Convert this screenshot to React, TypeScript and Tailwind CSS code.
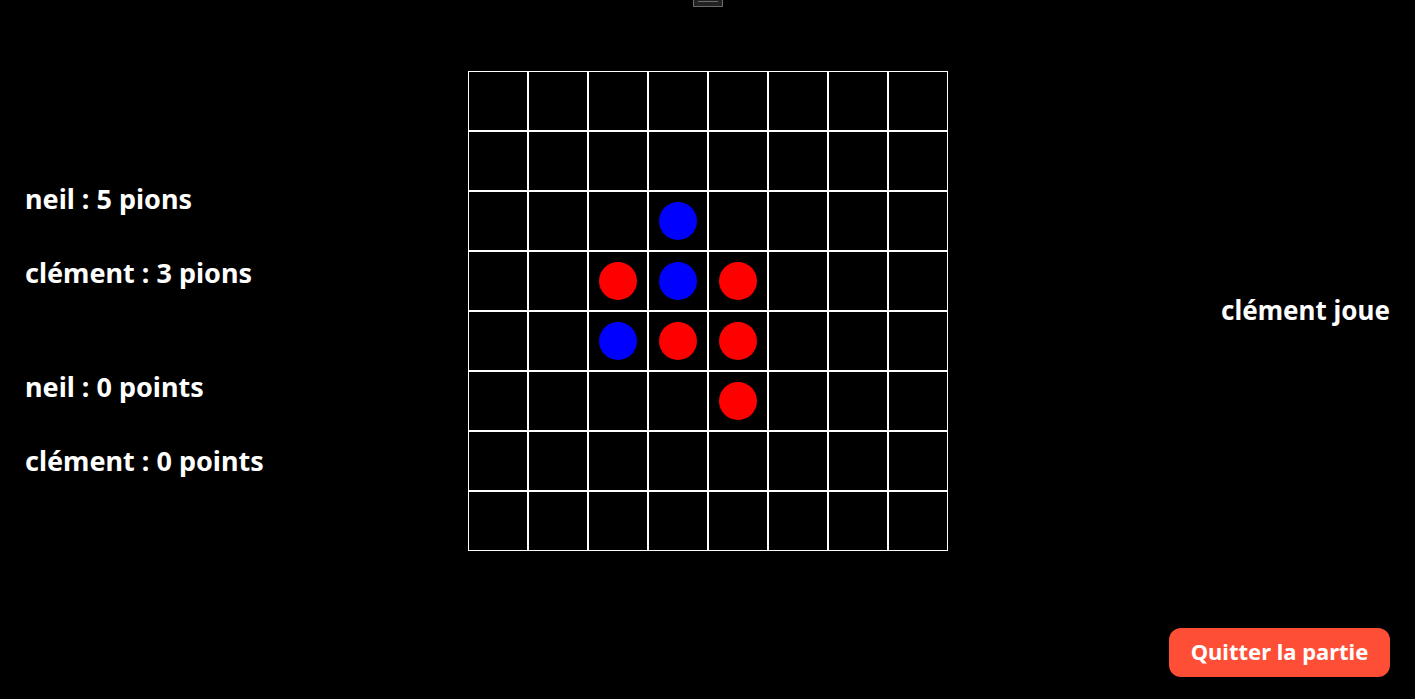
type Color = "red" | "blue";

const SIZE = 8;

const pieces: Record<string, Color> = {
  "2-3": "blue",
  "3-2": "red",
  "3-3": "blue",
  "3-4": "red",
  "4-2": "blue",
  "4-3": "red",
  "4-4": "red",
  "5-4": "red",
};

function Board() {
  return (
    <div role="group" aria-label="Plateau" className="grid grid-cols-8">
      {Array.from({ length: SIZE * SIZE }, (_, i) => {
        const color = pieces[`${Math.floor(i / SIZE)}-${i % SIZE}`];
        return (
          <button
            key={i}
            type="button"
            aria-label={`Case ${i + 1}`}
            className="flex size-15 items-center justify-center border border-white"
          >
            {color && (
              <span
                className={`size-[38px] rounded-full ${color === "red" ? "bg-[#ff0000]" : "bg-[#0000ff]"}`}
              />
            )}
          </button>
        );
      })}
    </div>
  );
}

export default function App() {
  return (
    <div className="relative flex min-h-screen flex-col bg-black px-[25px] font-['Noto_Sans',sans-serif] font-bold text-white">
      <div className="absolute top-0 left-1/2 flex h-[7px] w-[30px] -translate-x-1/2 justify-center border border-t-0 border-[#696969] bg-[#222222] pt-px">
        <span className="h-px w-5 bg-[#696969]" />
      </div>

      <main className="grid flex-1 grid-cols-[1fr_auto_1fr] items-center pb-[6px] leading-[37px]">
        <section className="flex flex-col gap-[77px] pt-9 text-[27px]">
          <div className="flex flex-col gap-[37px]">
            <p>neil : 5 pions</p>
            <p>clément : 3 pions</p>
          </div>
          <div className="flex flex-col gap-[37px]">
            <p>neil : 0 points</p>
            <p>clément : 0 points</p>
          </div>
        </section>
        <Board />
        <p className="pb-[2px] text-right text-[26px]">clément joue</p>
      </main>

      <footer className="flex justify-end pb-[22px]">
        <button
          type="button"
          className="h-[49px] min-w-[221px] rounded-xl bg-[#ff4e36] px-5 pb-[2px] text-[22px] leading-[29px] whitespace-nowrap"
        >
          Quitter la partie
        </button>
      </footer>
    </div>
  );
}
